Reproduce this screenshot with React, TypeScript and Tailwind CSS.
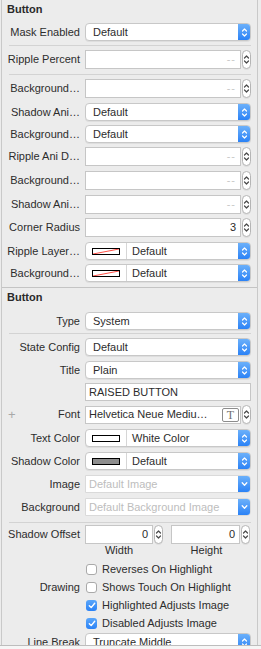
import React from "react";

const UpDown = ({ color = "#fff" }: { color?: string }) => (
  <svg width="7" height="11" viewBox="0 0 7 11" fill="none" stroke={color} strokeWidth="1.2" strokeLinecap="round" strokeLinejoin="round">
    <path d="M1.5 4 L3.5 2 L5.5 4" />
    <path d="M1.5 7 L3.5 9 L5.5 7" />
  </svg>
);

const Down = () => (
  <svg width="7" height="6" viewBox="0 0 7 6" fill="none" stroke="#fff" strokeWidth="1.3" strokeLinecap="round" strokeLinejoin="round">
    <path d="M1.2 1.8 L3.5 4.2 L5.8 1.8" />
  </svg>
);

function Row({ label, children, className = "" }: { label?: string; children: React.ReactNode; className?: string }) {
  return (
    <div className={`flex items-center gap-[5px] ${className}`}>
      <div className="w-[78px] shrink-0 text-right whitespace-nowrap">{label}</div>
      {children}
    </div>
  );
}

function Popup({ text, w = "w-[166px]" }: { text: string; w?: string }) {
  return (
    <div className={`flex h-[18px] ${w} rounded-[4px] bg-white border border-[#c8c8c8] shadow-[0_1px_0_rgba(0,0,0,0.06)] overflow-hidden`}>
      <div className="flex-1 pl-[7px] flex items-center">{text}</div>
      <div className="w-[12px] bg-gradient-to-b from-[#6bb0fa] to-[#2a82f6] flex items-center justify-center">
        <UpDown />
      </div>
    </div>
  );
}

function ImgPopup({ text }: { text: string }) {
  return (
    <div className="flex h-[18px] w-[166px] rounded-r-[4px] bg-white border border-[#dadada] overflow-hidden">
      <div className="flex-1 pl-[3px] flex items-center text-[#bdbdbd] whitespace-nowrap">{text}</div>
      <div className="w-[12px] bg-gradient-to-b from-[#6bb0fa] to-[#2a82f6] flex items-center justify-center">
        <Down />
      </div>
    </div>
  );
}

function Swatch({ kind }: { kind: "none" | "white" | "gray" }) {
  return (
    <div className={`w-[28px] h-[7px] border border-black ${kind === "gray" ? "bg-[#8e8e8e]" : "bg-white"}`}>
      {kind === "none" && (
        <svg width="26" height="5" viewBox="0 0 26 5" className="block">
          <line x1="0" y1="5" x2="26" y2="0" stroke="#ff3b30" strokeWidth="0.9" />
        </svg>
      )}
    </div>
  );
}

function ColorPopup({ kind, text }: { kind: "none" | "white" | "gray"; text: string }) {
  return (
    <div className="flex h-[18px] w-[166px] rounded-[4px] bg-white border border-[#c8c8c8] shadow-[0_1px_0_rgba(0,0,0,0.06)] overflow-hidden">
      <div className="w-[41px] border-r border-[#d6d6d6] flex items-center justify-center">
        <Swatch kind={kind} />
      </div>
      <div className="flex-1 pl-[5px] flex items-center">{text}</div>
      <div className="w-[12px] bg-gradient-to-b from-[#6bb0fa] to-[#2a82f6] flex items-center justify-center">
        <UpDown />
      </div>
    </div>
  );
}

function Stepper() {
  return (
    <div className="w-[9px] h-[19px] rounded-full border border-[#b5b5b5] bg-white flex items-center justify-center shadow-[0_1px_0_rgba(0,0,0,0.05)]">
      <UpDown color="#4a4a4a" />
    </div>
  );
}

function NumField({ value, w = "w-[156px]" }: { value?: string; w?: string }) {
  return (
    <div className="flex items-center gap-[1px]">
      <div className={`${w} h-[19px] bg-white border border-[#c6c6c6] flex items-center justify-end pr-[4px]`}>
        {value ? <span>{value}</span> : <span className="text-[#c8c8c8] tracking-[1px]">--</span>}
      </div>
      <Stepper />
    </div>
  );
}

function Check({ on, label }: { on?: boolean; label: string }) {
  return (
    <div className="flex items-center gap-[5px] ml-[1px]">
      {on ? (
        <div className="w-[11px] h-[11px] rounded-[3px] bg-gradient-to-b from-[#5aa6fa] to-[#2a82f6] flex items-center justify-center">
          <svg width="8" height="7" viewBox="0 0 8 7" fill="none" stroke="#fff" strokeWidth="1.4" strokeLinecap="round" strokeLinejoin="round">
            <path d="M1.3 3.8 L3.2 5.6 L6.7 1.3" />
          </svg>
        </div>
      ) : (
        <div className="w-[11px] h-[11px] rounded-[3px] bg-white border border-[#a9a9a9]" />
      )}
      <span className="whitespace-nowrap">{label}</span>
    </div>
  );
}

const Sep = ({ className = "" }: { className?: string }) => (
  <div className={`ml-[7px] w-[242px] h-[1px] bg-[#d3d3d3] ${className}`} />
);

const Header = () => <div className="h-[18px] pl-[5px] flex items-center font-bold text-[#2a2a2a]">Button</div>;

export default function App() {
  return (
    <div className="w-[261px] h-[649px] bg-[#ececec] overflow-hidden flex flex-col font-['Liberation_Sans',Arial,sans-serif] text-[11px] text-[#2c2c2c]">
      <div className="h-[645px] ml-[1px] w-[257px] border-l border-r border-[#c9c9c9] overflow-hidden shrink-0">
        <Header />
        <Row label="Mask Enabled" className="mt-[5px]"><Popup text="Default" /></Row>
        <Sep className="mt-[4px]" />
        <Row label="Ripple Percent" className="mt-[4px]"><NumField /></Row>
        <Sep className="mt-[5px]" />
        <Row label="Background…" className="mt-[4px]"><NumField /></Row>
        <Row label="Shadow Ani…" className="mt-[5px]"><Popup text="Default" /></Row>
        <Row label="Background…" className="mt-[4px]"><Popup text="Default" /></Row>
        <Row label="Ripple Ani D…" className="mt-[4px]"><NumField /></Row>
        <Row label="Background…" className="mt-[5px]"><NumField /></Row>
        <Row label="Shadow Ani…" className="mt-[5px]"><NumField /></Row>
        <Row label="Corner Radius" className="mt-[4px]"><NumField value="3" /></Row>
        <Row label="Ripple Layer…" className="mt-[5px]"><ColorPopup kind="none" text="Default" /></Row>
        <Row label="Background…" className="mt-[4px]"><ColorPopup kind="none" text="Default" /></Row>
        <div className="mt-[5px] h-[1px] bg-[#c4c4c4]" />
        <Header />
        <Row label="Type" className="mt-[6px]"><Popup text="System" /></Row>
        <Sep className="mt-[3px]" />
        <Row label="State Config" className="mt-[4px]"><Popup text="Default" /></Row>
        <Row label="Title" className="mt-[5px]"><Popup text="Plain" /></Row>
        <Row className="mt-[4px]">
          <div className="w-[166px] h-[18px] bg-white border border-[#c6c6c6] flex items-center pl-[3px]">RAISED BUTTON</div>
        </Row>
        <div className="mt-[4px] flex items-center gap-[5px]">
          <div className="w-[78px] shrink-0 flex items-center justify-between">
            <span className="pl-[6px] text-[#a8a8a8] text-[13px] leading-none font-light">+</span>
            <span>Font</span>
          </div>
          <div className="flex items-center gap-[1px]">
            <div className="w-[156px] h-[18px] bg-white border border-[#c6c6c6] flex items-center pl-[3px] pr-[1px] justify-between">
              <span className="whitespace-nowrap">Helvetica Neue Mediu…</span>
              <div className="w-[17px] h-[14px] border-[1.5px] border-[#8c8c8c] rounded-[2px] flex items-center justify-center font-['Liberation_Serif',serif] text-[12px] leading-none text-[#6f6f6f]">T</div>
            </div>
            <Stepper />
          </div>
        </div>
        <Row label="Text Color" className="mt-[5px]"><ColorPopup kind="white" text="White Color" /></Row>
        <Row label="Shadow Color" className="mt-[5px]"><ColorPopup kind="gray" text="Default" /></Row>
        <Row label="Image" className="mt-[5px]"><ImgPopup text="Default Image" /></Row>
        <Row label="Background" className="mt-[5px]"><ImgPopup text="Default Background Image" /></Row>
        <Sep className="mt-[6px]" />
        <Row label="Shadow Offset" className="mt-[2px]">
          <div className="flex items-center gap-[8px]">
            <NumField value="0" w="w-[68px]" />
            <NumField value="0" w="w-[69px]" />
          </div>
        </Row>
        <div className="h-[12px] flex items-center pl-[83px] gap-[19px]">
          <div className="w-[68px] text-center">Width</div>
          <div className="w-[69px] text-center">Height</div>
        </div>
        <Row className="mt-[4px] h-[18px]"><Check label="Reverses On Highlight" /></Row>
        <Row label="Drawing" className="h-[18px]"><Check label="Shows Touch On Highlight" /></Row>
        <Row className="h-[18px]"><Check on label="Highlighted Adjusts Image" /></Row>
        <Row className="h-[18px]"><Check on label="Disabled Adjusts Image" /></Row>
        <Row label="Line Break" className="mt-[1px]"><Popup text="Truncate Middle" /></Row>
      </div>
      <div className="h-[1px] bg-[#bdbdbd] shrink-0" />
      <div className="flex-1 bg-[#f6f6f6]" />
    </div>
  );
}
